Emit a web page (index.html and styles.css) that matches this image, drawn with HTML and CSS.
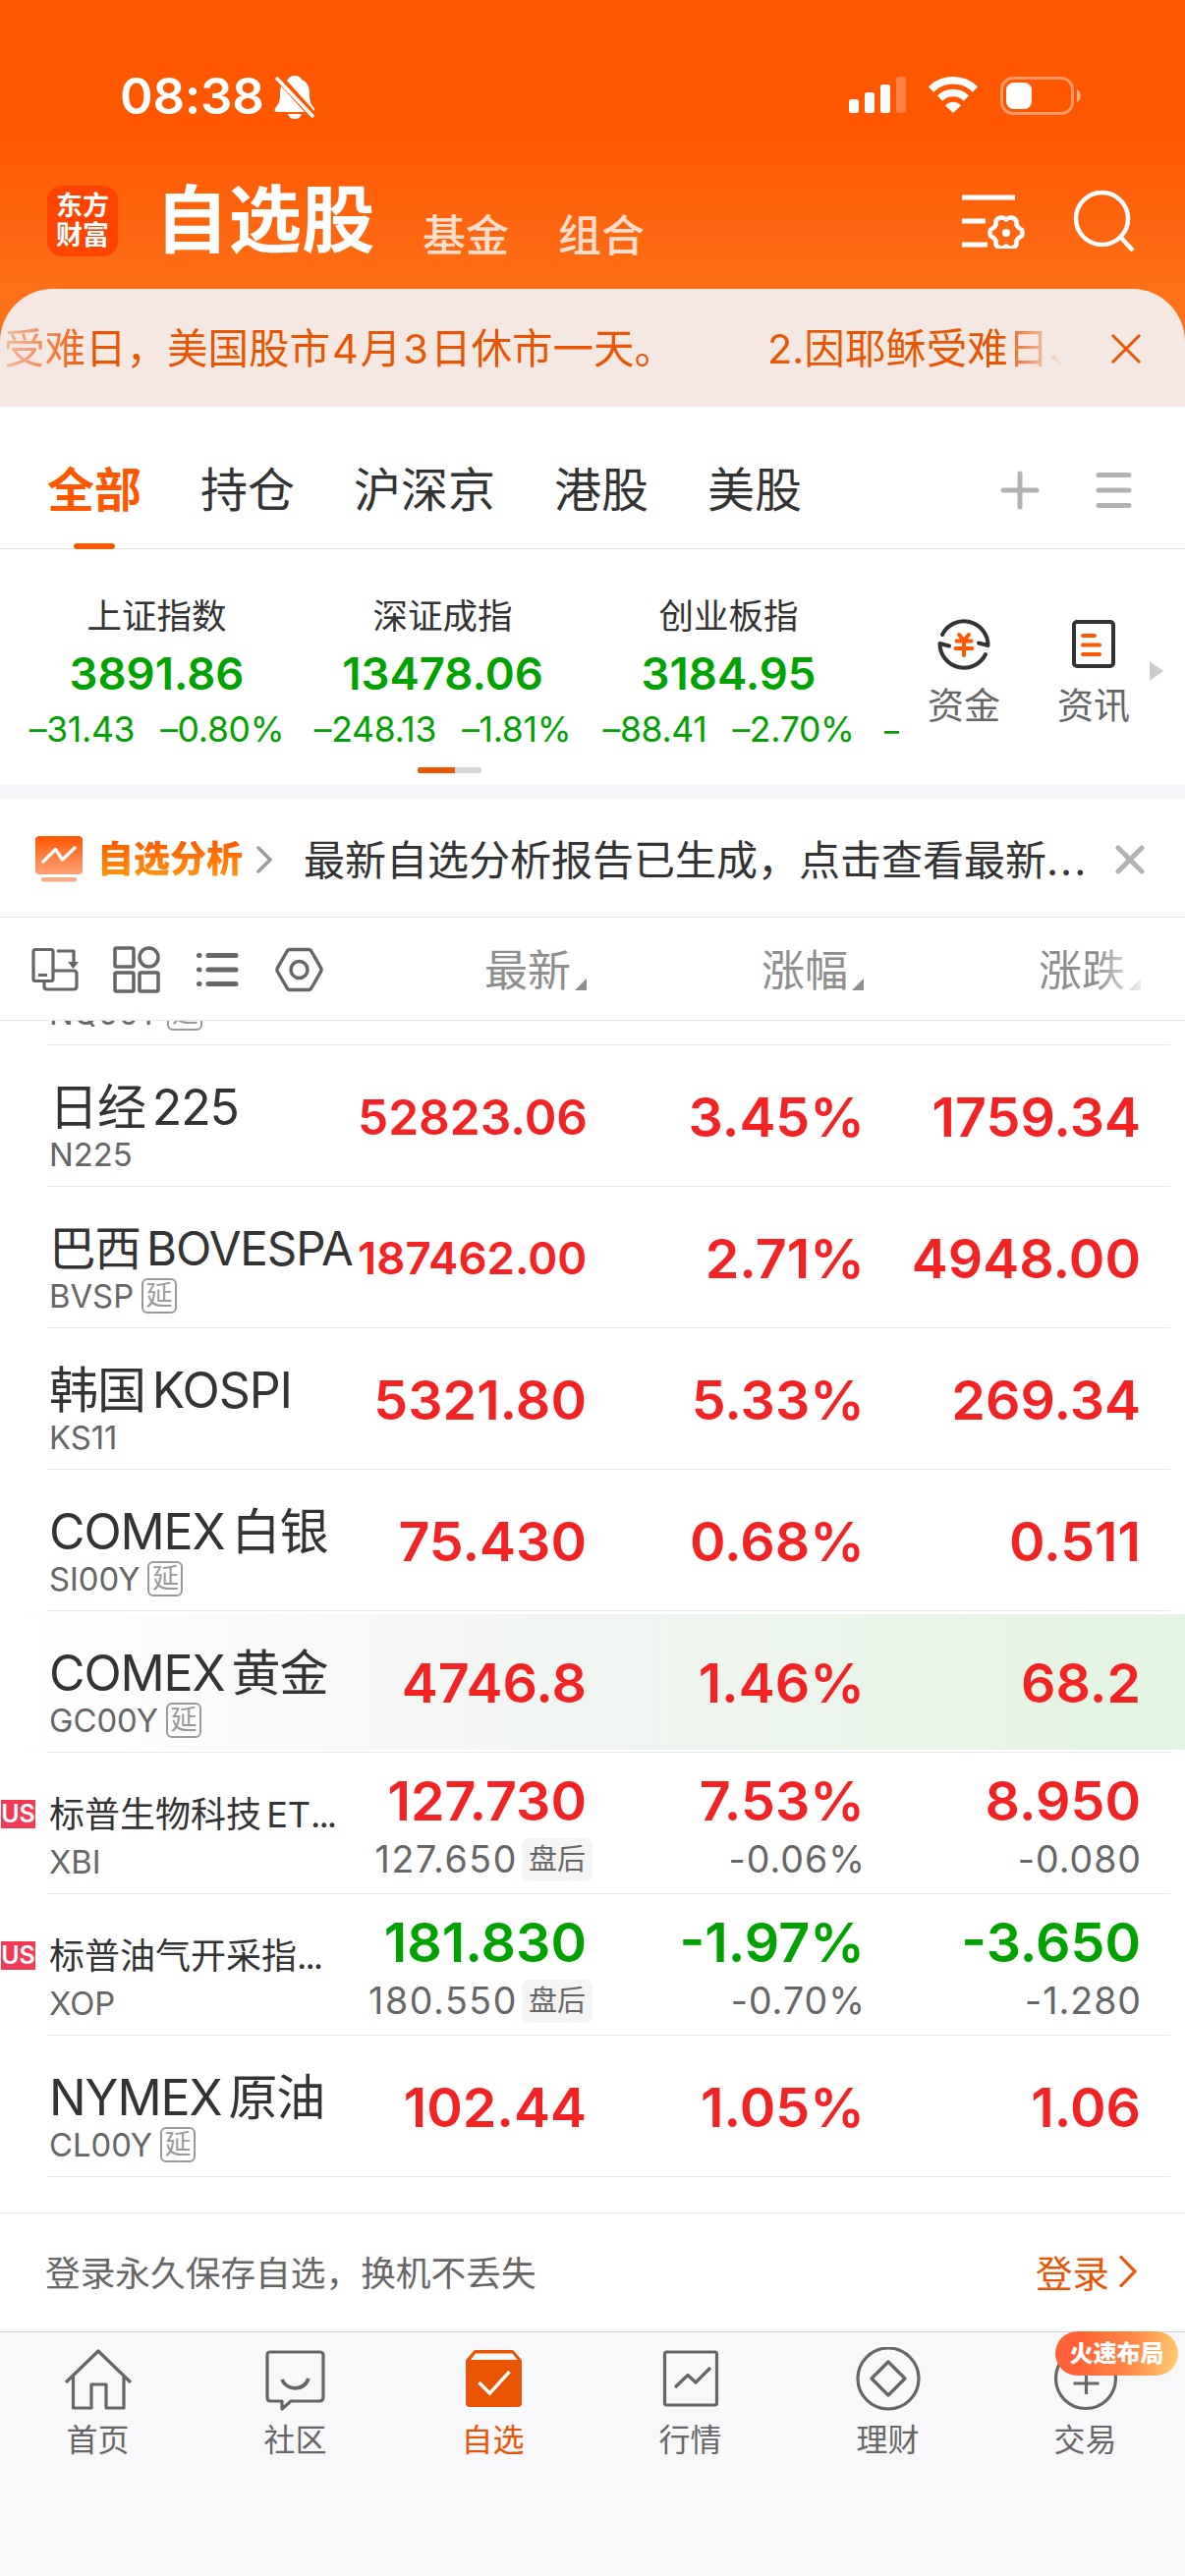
FILE: index.html
```html
<!DOCTYPE html>
<html lang="zh-CN">
<head>
  <meta charset="UTF-8">
  <title>自选股</title>
  <link rel="stylesheet" href="styles.css">
</head>
<body>
  <div class="top">
    <div class="status">
      <span class="time">08:38</span>
      <svg class="bell" width="42" height="46" viewBox="0 0 42 46">
        <path fill="#fff" d="M21 1c4 0 6 2 7 4 6 2 8 8 8 14 0 8 1 10 4 14 2 3 1 5-1 5H3c-3 0-3-3-1-5 4-5 4-8 4-14C6 13 8 7 14 5c1-2 3-4 7-4zM14 40h14c-1 3-3 5-7 5s-6-2-7-5z"/>
        <path stroke="#ff5600" stroke-width="8" d="M3 1l38 42"/>
        <path stroke="#fff" stroke-width="3.5" stroke-linecap="round" d="M3 4l36 38"/>
      </svg>
      <div class="status-right">
        <svg width="58" height="38" viewBox="0 0 58 38" fill="#fff">
          <rect x="0" y="23" width="10" height="14" rx="2.5"/>
          <rect x="16" y="16" width="10" height="21" rx="2.5"/>
          <rect x="32" y="8" width="10" height="29" rx="2.5"/>
          <rect x="48" y="0" width="10" height="37" rx="2.5" opacity=".25"/>
        </svg>
        <svg width="50" height="38" viewBox="0 0 50 38" fill="none" stroke="#fff" stroke-width="7.5">
          <path d="M2.5 13a32 32 0 0 1 45 0"/>
          <path d="M11.500 22a19.500 19.500 0 0 1 27 0"/>
          <path fill="#fff" stroke="none" d="M25 37l-8-7.500c4-5 12-5 16 0z"/>
        </svg>
        <svg width="83" height="39" viewBox="0 0 83 39">
          <rect x="1.500" y="1.500" width="72" height="36" rx="11.500" fill="none" stroke="#fff" stroke-opacity=".4" stroke-width="3"/>
          <rect x="6" y="6" width="26" height="27" rx="7.500" fill="#fff"/>
          <path d="M78 13c5 1.500 5 11.500 0 13z" fill="#fff" opacity=".5"/>
        </svg>
      </div>
    </div>

    <div class="nav">
      <div class="logo">东方<br>财富</div>
      <h1>自选股</h1>
      <a class="nav-link">基金</a>
      <a class="nav-link">组合</a>
      <svg class="nav-filter" width="66" height="60" viewBox="0 0 66 60" fill="none" stroke="#fff" stroke-width="5">
        <path d="M0 8h54M0 32h24M0 56h26"/>
        <path stroke-width="4.500" stroke-linejoin="round" d="M45 30.500Q49 27 52 29Q56.500 30.500 55.500 36Q57 39 61 41Q62 44 61 47Q57 49 55.500 52Q56.500 57.500 52 59Q49 61 45 57.500Q41 61 38 59Q33.500 57.500 34.500 52Q33 49 29 47Q28 44 29 41Q33 39 34.500 36Q33.500 30.500 38 29Q41 27 45 30.500z"/>
        <circle cx="45" cy="44" r="4" fill="#fff" stroke="none"/>
      </svg>
      <svg class="nav-search" width="64" height="66" viewBox="0 0 64 66" fill="none" stroke="#fff" stroke-width="4.500">
        <circle cx="29.500" cy="29.500" r="26.500"/>
        <path d="M48 48l13 14"/>
      </svg>
    </div>

    <div class="notice">
      <div class="notice-text">
        <span>受难日，美国股市<i>4</i>月<i>3</i>日休市一天。</span>
        <span class="notice-next">2.因耶稣受难日、</span>
      </div>
      <svg width="32" height="32" viewBox="0 0 32 32" stroke="#ea5504" stroke-width="3" fill="none"><path d="M2 2l28 28M30 2L2 30"/></svg>
    </div>
  </div>

  <div class="tabs">
    <a class="tab active">全部</a>
    <a class="tab">持仓</a>
    <a class="tab">沪深京</a>
    <a class="tab">港股</a>
    <a class="tab">美股</a>
    <div class="tab-tools">
      <svg width="40" height="40" viewBox="0 0 40 40" stroke="#b2b2b2" stroke-width="5" stroke-linecap="round"><path d="M20 3v34M3 20h34"/></svg>
      <svg width="40" height="40" viewBox="0 0 40 40" stroke="#b2b2b2" stroke-width="5" stroke-linecap="round"><path d="M4 4.500h31M4 20h31M4 35.500h31"/></svg>
    </div>
  </div>

  <div class="market">
    <div class="indices">
      <div class="index">
        <div class="index-name">上证指数</div>
        <div class="index-value">3891.86</div>
        <div class="index-change"><span>–31.43</span><span>–0.80%</span></div>
      </div>
      <div class="index">
        <div class="index-name">深证成指</div>
        <div class="index-value">13478.06</div>
        <div class="index-change"><span>–248.13</span><span>–1.81%</span></div>
      </div>
      <div class="index">
        <div class="index-name">创业板指</div>
        <div class="index-value">3184.95</div>
        <div class="index-change"><span>–88.41</span><span>–2.70%</span></div>
      </div>
      <div class="index-cut">–</div>
    </div>
    <div class="shortcut">
      <svg width="56" height="56" viewBox="0 0 56 56" fill="none" stroke="#333" stroke-width="4" stroke-linecap="round" stroke-linejoin="round">
        <path d="M6 18A24.500 24.500 0 0 1 52.500 29L43 26.500"/>
        <path d="M50 38A24.500 24.500 0 0 1 3.500 27L13 29.500"/>
        <path stroke="#ff5600" d="M23 18l5 6 5-6M20.500 24.500h15M19.500 32h17M28 25v14"/>
      </svg>
      <span>资金</span>
    </div>
    <div class="shortcut">
      <svg width="56" height="56" viewBox="0 0 56 56" fill="none" stroke="#333" stroke-width="4" stroke-linecap="round">
        <rect x="8" y="5" width="40" height="45" rx="3"/>
        <path stroke="#ff5600" d="M17 19h12M17 28.500h17M17 38h17"/>
      </svg>
      <span>资讯</span>
    </div>
    <svg class="more" width="14" height="20" viewBox="0 0 14 20"><path fill="#ccc" d="M0 0l14 10L0 20z"/></svg>
  </div>
  <div class="pager"><b></b></div>

  <div class="report">
    <svg width="48" height="48" viewBox="0 0 48 48">
      <defs>
        <linearGradient id="rp" x1="0" y1="0" x2="0" y2="1"><stop offset="0" stop-color="#ff5600"/><stop offset="1" stop-color="#ffa178"/></linearGradient>
      </defs>
      <rect width="48" height="39" rx="4" fill="url(#rp)"/>
      <rect x="6" y="42" width="36" height="4.500" rx="2" fill="#ffa984"/>
      <path d="M8 26l12.500-12.500L27.500 24 40 12" fill="none" stroke="#fff" stroke-width="3.500" stroke-linecap="round" stroke-linejoin="round"/>
    </svg>
    <strong>自选分析</strong>
    <svg class="report-arrow" width="16" height="28" viewBox="0 0 16 28" fill="none" stroke="#999" stroke-width="3.500" stroke-linecap="round"><path d="M2 2l12 12L2 26"/></svg>
    <p>最新自选分析报告已生成，点击查看最新<em>...</em></p>
    <svg class="report-close" width="30" height="30" viewBox="0 0 30 30" stroke="#b2b2b2" stroke-width="5" stroke-linecap="round"><path d="M3 3l24 24M27 3L3 27"/></svg>
  </div>

  <div class="cols">
    <div class="view-tools">
      <svg width="50" height="50" viewBox="0 0 50 50" fill="none" stroke="#666" stroke-width="3.200" stroke-linejoin="round">
        <rect x="3" y="4.500" width="20" height="32" rx="2"/>
        <path d="M8 30.500h9M14 38v4q0 3 3 3h27q3 0 3-3V29q0-3-3-3H24M27 6h17v13"/>
        <path fill="#666" stroke="none" d="M38 17h11l-5.500 7z"/>
      </svg>
      <svg width="50" height="50" viewBox="0 0 50 50" fill="none" stroke="#666" stroke-width="3.500">
        <rect x="3" y="3" width="19" height="19" rx="1.500"/>
        <circle cx="37.500" cy="12.500" r="9.500"/>
        <rect x="3" y="28" width="19" height="19" rx="1.500"/>
        <rect x="28" y="28" width="19" height="19" rx="1.500"/>
      </svg>
      <svg width="50" height="50" viewBox="0 0 50 50" fill="none" stroke="#666" stroke-width="5" stroke-linecap="round">
        <path d="M5.500 10.500h.5M5.500 25h.5M5.500 39.500h.5M15 10.500h28M15 25h28M15 39.500h28"/>
      </svg>
      <svg width="50" height="50" viewBox="0 0 50 50" fill="none" stroke="#666" stroke-width="3.500" stroke-linejoin="round">
        <path d="M15 4.500h19q2 0 3 2l9.500 16.500q1 2 0 4L37 43.500q-1 2-3 2H15q-2 0-3-2L2.500 27q-1-2 0-4L12 6.500q1-2 3-2z"/>
        <circle cx="24.500" cy="25" r="8.500"/>
      </svg>
    </div>
    <div class="col">最新<i></i></div>
    <div class="col">涨幅<i></i></div>
    <div class="col col-fade">涨跌<i></i></div>
  </div>

  <div class="list">
    <div class="cut"><div class="code">NQ00Y<b>延</b></div></div>

    <div class="row">
      <div class="cells">
        <div class="stock"><div class="name">日经 225</div><div class="code">N225</div></div>
        <div class="num up mid">52823.06</div>
        <div class="num up">3.45%</div>
        <div class="num up">1759.34</div>
      </div>
    </div>
    <div class="row">
      <div class="cells">
        <div class="stock"><div class="name long">巴西 BOVESPA</div><div class="code">BVSP<b>延</b></div></div>
        <div class="num up small">187462.00</div>
        <div class="num up">2.71%</div>
        <div class="num up">4948.00</div>
      </div>
    </div>
    <div class="row">
      <div class="cells">
        <div class="stock"><div class="name">韩国 KOSPI</div><div class="code">KS11</div></div>
        <div class="num up">5321.80</div>
        <div class="num up">5.33%</div>
        <div class="num up">269.34</div>
      </div>
    </div>
    <div class="row">
      <div class="cells">
        <div class="stock"><div class="name">COMEX 白银</div><div class="code">SI00Y<b>延</b></div></div>
        <div class="num up">75.430</div>
        <div class="num up">0.68%</div>
        <div class="num up">0.511</div>
      </div>
    </div>
    <div class="row flash">
      <div class="cells">
        <div class="stock"><div class="name">COMEX 黄金</div><div class="code">GC00Y<b>延</b></div></div>
        <div class="num up">4746.8</div>
        <div class="num up">1.46%</div>
        <div class="num up">68.2</div>
      </div>
    </div>
    <div class="row us">
      <div class="cells">
        <div class="stock"><span class="flag">US</span><div class="name etf">标普生物科技 ET<em>...</em></div><div class="code">XBI</div></div>
        <div class="num up">127.730<small class="ext">127.650<b>盘后</b></small></div>
        <div class="num up">7.53%<small>-0.06%</small></div>
        <div class="num up">8.950<small>-0.080</small></div>
      </div>
    </div>
    <div class="row us">
      <div class="cells">
        <div class="stock"><span class="flag">US</span><div class="name etf">标普油气开采指<em>...</em></div><div class="code">XOP</div></div>
        <div class="num down">181.830<small class="ext">180.550<b>盘后</b></small></div>
        <div class="num down">-1.97%<small>-0.70%</small></div>
        <div class="num down">-3.650<small>-1.280</small></div>
      </div>
    </div>
    <div class="row">
      <div class="cells">
        <div class="stock"><div class="name">NYMEX 原油</div><div class="code">CL00Y<b>延</b></div></div>
        <div class="num up">102.44</div>
        <div class="num up">1.05%</div>
        <div class="num up">1.06</div>
      </div>
    </div>
  </div>

  <div class="login">
    <span>登录永久保存自选，换机不丢失</span>
    <a>登录<svg width="20" height="34" viewBox="0 0 20 34" fill="none" stroke="#ea5504" stroke-width="3.200"><path d="M2 1.500L17 17 2 32.500"/></svg></a>
  </div>

  <div class="tabbar">
    <a class="item">
      <svg width="70" height="66" viewBox="0 0 70 66" fill="none" stroke="#666" stroke-width="3.200">
        <path d="M2 36L35 4l33 32M9.500 30v32H28V38h15v24h18V30" stroke-linejoin="round"/>
      </svg>
      <span>首页</span>
    </a>
    <a class="item">
      <svg width="70" height="66" viewBox="0 0 70 66" fill="none" stroke="#666" stroke-width="3.200" stroke-linejoin="round">
        <path d="M9 5h50q4 0 4 3v43q0 4-4 4H30l-9 8v-8H9q-3 0-3-4V8q0-3 3-3z"/>
        <path d="M21 33c5 12 22 12 27-1" stroke-width="3.800"/>
      </svg>
      <span>社区</span>
    </a>
    <a class="item on">
      <svg width="70" height="66" viewBox="0 0 70 66" fill="none">
        <path fill="#ea5504" d="M17 3h37q2 0 3 2l6 7q1 1 1 3v42q0 4-4 4H11q-4 0-4-4V15q0-2 1-3l6-7q1-2 3-2z"/>
        <path fill="#f8f8fa" d="M17 6.500h37.500l5 6.500H12z"/>
        <path d="M20.500 36l11 11 20-22" stroke="#fff" stroke-width="3.400"/>
      </svg>
      <span>自选</span>
    </a>
    <a class="item">
      <svg width="70" height="66" viewBox="0 0 70 66" fill="none" stroke="#666" stroke-width="3.200" stroke-linejoin="round">
        <rect x="8.500" y="5" width="53" height="54" rx="2"/>
        <path d="M19 41l13-12.500 8 7.500 15-15"/>
      </svg>
      <span>行情</span>
    </a>
    <a class="item">
      <svg width="70" height="66" viewBox="0 0 70 66" fill="none" stroke="#666" stroke-width="3.200" stroke-linejoin="round">
        <circle cx="35" cy="32" r="31"/>
        <path d="M35 15l17 17-17 17-17-17z"/>
      </svg>
      <span>理财</span>
    </a>
    <a class="item">
      <svg width="70" height="66" viewBox="0 0 70 66" fill="none" stroke="#666" stroke-width="3.200">
        <circle cx="35" cy="32" r="30.500"/>
        <path d="M22.500 37h26M35.500 24v24"/>
      </svg>
      <span>交易</span>
      <b class="promo">火速布局</b>
    </a>
  </div>
</body>
</html>
```

FILE: styles.css
```css
* {
  box-sizing: border-box;
}
body {
  margin: 0;
  width: 1206px;
  height: 2622px;
  overflow: hidden;
  display: flex;
  flex-direction: column;
  background-color: #fff;
  color: #333;
  font-family: Inter, "Noto Sans CJK SC", sans-serif;
}
svg {
  display: block;
  flex: none;
}
i, em {
  font-style: normal;
}

/* header */
.top {
  height: 414px;
  flex: none;
  background: linear-gradient(#ff5600 125px, #ff7018 300px);
}
.status {
  display: flex;
  height: 189px;
  padding: 72px 105px 0 122px;
}
.time {
  width: 157px;
  color: #fff;
  font-size: 51px;
  font-weight: 600;
  line-height: 52px;
  letter-spacing: -0.2px;
}
.bell {
  margin-top: 4px;
}
.status-right {
  display: flex;
  gap: 23px;
  margin-left: auto;
  padding-top: 6px;
}
.nav {
  display: flex;
  height: 105px;
  padding: 0 50px 0 48px;
  color: #fff;
}
.logo {
  width: 72px;
  height: 72px;
  padding: 6px 0;
  border-radius: 15px;
  background-color: #ff4400;
  font-size: 27px;
  font-weight: 700;
  line-height: 30px;
  text-align: center;
}
h1 {
  margin: -1px 0 0 38px;
  width: 272px;
  font-size: 74.5px;
  font-weight: 700;
  line-height: 72px;
}
.nav-link {
  width: 138px;
  padding-top: 27px;
  font-size: 44px;
  font-weight: 500;
  line-height: 48px;
  color: rgba(255, 255, 255, 0.8);
}
.nav-filter {
  margin: 4px 0 0 auto;
}
.nav-search {
  margin: 4px 0 0 47px;
}
.notice {
  display: flex;
  align-items: center;
  height: 120px;
  padding: 1px 44px 0 4px;
  border-radius: 54px 54px 0 0;
  background-color: #f5e7e1;
  color: #ea5504;
}
.notice-text {
  display: flex;
  width: 1081px;
  margin-right: auto;
  overflow: hidden;
  white-space: nowrap;
  font-size: 41.5px;
  line-height: 60px;
  -webkit-mask-image: linear-gradient(90deg, rgba(0,0,0,.3), #000 90px, #000 1015px, transparent 1078px);
  mask-image: linear-gradient(90deg, rgba(0,0,0,.3), #000 90px, #000 1015px, transparent 1078px);
}
.notice-text i {
  margin: 0 2px;
}
.notice-next {
  margin-left: 94px;
}

/* group tabs */
.tabs {
  display: flex;
  flex: none;
  gap: 60px;
  height: 145px;
  padding: 0 52px 0 48px;
  border-bottom: 1px solid #e3e3e3;
  font-size: 48px;
  line-height: 170px;
}
.tab.active {
  position: relative;
  color: #ff5600;
  font-weight: 700;
}
.tab.active::after {
  content: "";
  position: absolute;
  left: 27px;
  top: 139px;
  width: 42px;
  height: 6px;
  border-radius: 3px;
  background-color: #ff5600;
}
.tab-tools {
  display: flex;
  gap: 56px;
  margin-left: auto;
  padding-top: 65px;
}

/* market indices */
.market {
  display: flex;
  flex: none;
  height: 222px;
}
.indices {
  display: flex;
  width: 915px;
  padding: 44px 0 0 14px;
  overflow: hidden;
}
.index {
  width: 291px;
  flex: none;
  text-align: center;
  white-space: nowrap;
}
.index-name {
  font-size: 35.5px;
  line-height: 50px;
}
.index-value {
  margin-top: 4px;
  color: #00a200;
  font-size: 45.5px;
  font-weight: 600;
  line-height: 58px;
}
.index-change {
  display: flex;
  justify-content: center;
  gap: 26px;
  margin-top: 6px;
  color: #00a200;
  font-size: 35.5px;
  line-height: 44px;
  letter-spacing: -0.3px;
}
.index-cut {
  margin-top: 118px;
  padding-left: 13px;
  color: #00a200;
  font-size: 35px;
  line-height: 44px;
}
.shortcut {
  display: flex;
  flex-direction: column;
  align-items: center;
  width: 132px;
  padding-top: 69px;
  color: #666;
  font-size: 37px;
  line-height: 50px;
}
.shortcut span {
  margin-top: 10px;
}
.more {
  margin: 114px 0 0 -9px;
}
.pager {
  display: flex;
  flex: none;
  height: 33px;
  border-bottom: 15px solid #f5f6fa;
}
.pager::before {
  content: "";
  width: 425px;
}
.pager b {
  width: 65px;
  height: 6px;
  border-radius: 2px;
  background: linear-gradient(90deg, #ea5504 38px, #d3d6db 38px);
}

/* report banner */
.report {
  display: flex;
  flex: none;
  align-items: center;
  height: 120px;
  padding: 2px 41px 0 36px;
  border-bottom: 1px solid #e3e3e3;
}
.report strong {
  margin: 0 14px 0 15px;
  font-size: 37px;
  font-weight: 900;
  line-height: 44px;
  background: linear-gradient(#ff5600, #ff9a10);
  -webkit-background-clip: text;
  background-clip: text;
  color: transparent;
}
.report p {
  margin: 3px auto 0 32px;
  font-size: 42px;
  line-height: 56px;
  white-space: nowrap;
}
.report em {
  letter-spacing: 2px;
}

/* column heads */
.cols {
  display: flex;
  flex: none;
  height: 105px;
  border-bottom: 1px solid #e8e8e8;
}
.view-tools {
  display: flex;
  align-items: center;
  gap: 33px;
  width: 364px;
  padding: 2px 0 0 31px;
}
.col {
  display: flex;
  justify-content: flex-end;
  width: 282px;
  color: #8e8e8e;
  font-size: 44px;
  line-height: 109px;
}
.col:nth-child(2) {
  width: 233px;
}
.col i {
  margin: 62px 0 0 4px;
  border-left: 12px solid transparent;
  border-bottom: 12px solid #8e8e93;
  align-self: flex-start;
}
.col-fade {
  -webkit-mask-image: linear-gradient(90deg, #000 235px, transparent 290px);
  mask-image: linear-gradient(90deg, #000 235px, transparent 290px);
}

/* stock list */
.list {
  flex: none;
  height: 1214px;
  overflow: hidden;
  border-bottom: 1px solid #e8e8e8;
}
.cut {
  display: flex;
  align-items: flex-end;
  height: 25px;
  margin: 0 15px 0 48px;
  padding: 0 0 14px 2px;
  overflow: hidden;
  border-bottom: 1px solid #e8e8e8;
}
.row::after {
  content: "";
  display: block;
  height: 1px;
  margin: 0 15px 0 48px;
  background-color: #e8e8e8;
}
.cells {
  display: flex;
  height: 143px;
}
.flash .cells {
  background: linear-gradient(90deg, #fff, #f1f5f2 47%, #e2f4e1) 0 3px / 100% 138px no-repeat;
}
.stock {
  position: relative;
  width: 364px;
  padding: 33px 0 0 50px;
  white-space: nowrap;
}
.name {
  font-size: 50px;
  line-height: 60px;
  letter-spacing: -1.1px;
  word-spacing: -6px;
}
.name.long {
  font-size: 47.5px;
}
.name.etf {
  font-size: 36px;
  letter-spacing: 0;
  word-spacing: -5px;
}
.etf em {
  letter-spacing: -2px;
}
.code {
  display: flex;
  color: #666;
  font-size: 32.8px;
  line-height: 36px;
}
.code b {
  width: 36px;
  height: 36px;
  margin-left: 8px;
  border: 2px solid #999;
  border-radius: 6px;
  color: #999;
  font-size: 27px;
  font-weight: 400;
  line-height: 31px;
  text-align: center;
}
.flag {
  position: absolute;
  left: 1px;
  top: 48px;
  width: 35px;
  height: 29px;
  background-color: #ef3b57;
  color: #fff;
  font-size: 25px;
  font-weight: 600;
  line-height: 29px;
  text-align: center;
}
.num {
  width: 281px;
  padding-top: 38px;
  font-size: 55.5px;
  font-weight: 600;
  line-height: 70px;
  text-align: right;
}
.stock + .num {
  width: 233px;
}
.num:nth-child(3) {
  width: 283px;
}
.num.mid {
  font-size: 49.6px;
}
.num.small {
  font-size: 45.6px;
}
.up {
  color: #f42323;
}
.down {
  color: #00a200;
}
.us .num {
  padding-top: 14px;
}
.num small {
  display: flex;
  justify-content: flex-end;
  margin: 3px -1px 0 0;
  color: #666;
  font-size: 37.5px;
  font-weight: 400;
  line-height: 44px;
  letter-spacing: 1px;
}
.num .ext {
  margin-right: -6px;
  letter-spacing: 1.6px;
}
.ext b {
  width: 72px;
  height: 44px;
  margin-left: 4px;
  border-radius: 7px;
  background-color: #f4f4f4;
  font-size: 29px;
  font-weight: 400;
  letter-spacing: 0;
  text-align: center;
}

/* login bar */
.login {
  display: flex;
  flex: none;
  align-items: center;
  justify-content: space-between;
  height: 120px;
  padding: 0 48px 3px 46px;
  color: #666;
  font-size: 35.7px;
}
.login a {
  display: flex;
  align-items: center;
  gap: 9px;
  color: #ea5504;
  font-size: 37.5px;
}

/* bottom bar */
.tabbar {
  display: flex;
  flex: 1;
  border-top: 1px solid #d0d3d8;
  background-color: #f8f8fa;
}
.item {
  position: relative;
  left: -1px;
  display: flex;
  flex-direction: column;
  align-items: center;
  width: 201px;
  padding-top: 15px;
  color: #666;
  font-size: 32px;
  line-height: 44px;
}
.item.on {
  color: #ea5504;
}
.item span {
  margin-top: 7px;
}
.promo {
  position: absolute;
  left: 70px;
  top: -1px;
  width: 125px;
  height: 45px;
  border-radius: 23px;
  background: linear-gradient(100deg, #ff6236 20%, #ff8748 60%, #ffd070);
  color: #fff;
  font-size: 24px;
  font-weight: 900;
  line-height: 45px;
  text-align: center;
}
```
